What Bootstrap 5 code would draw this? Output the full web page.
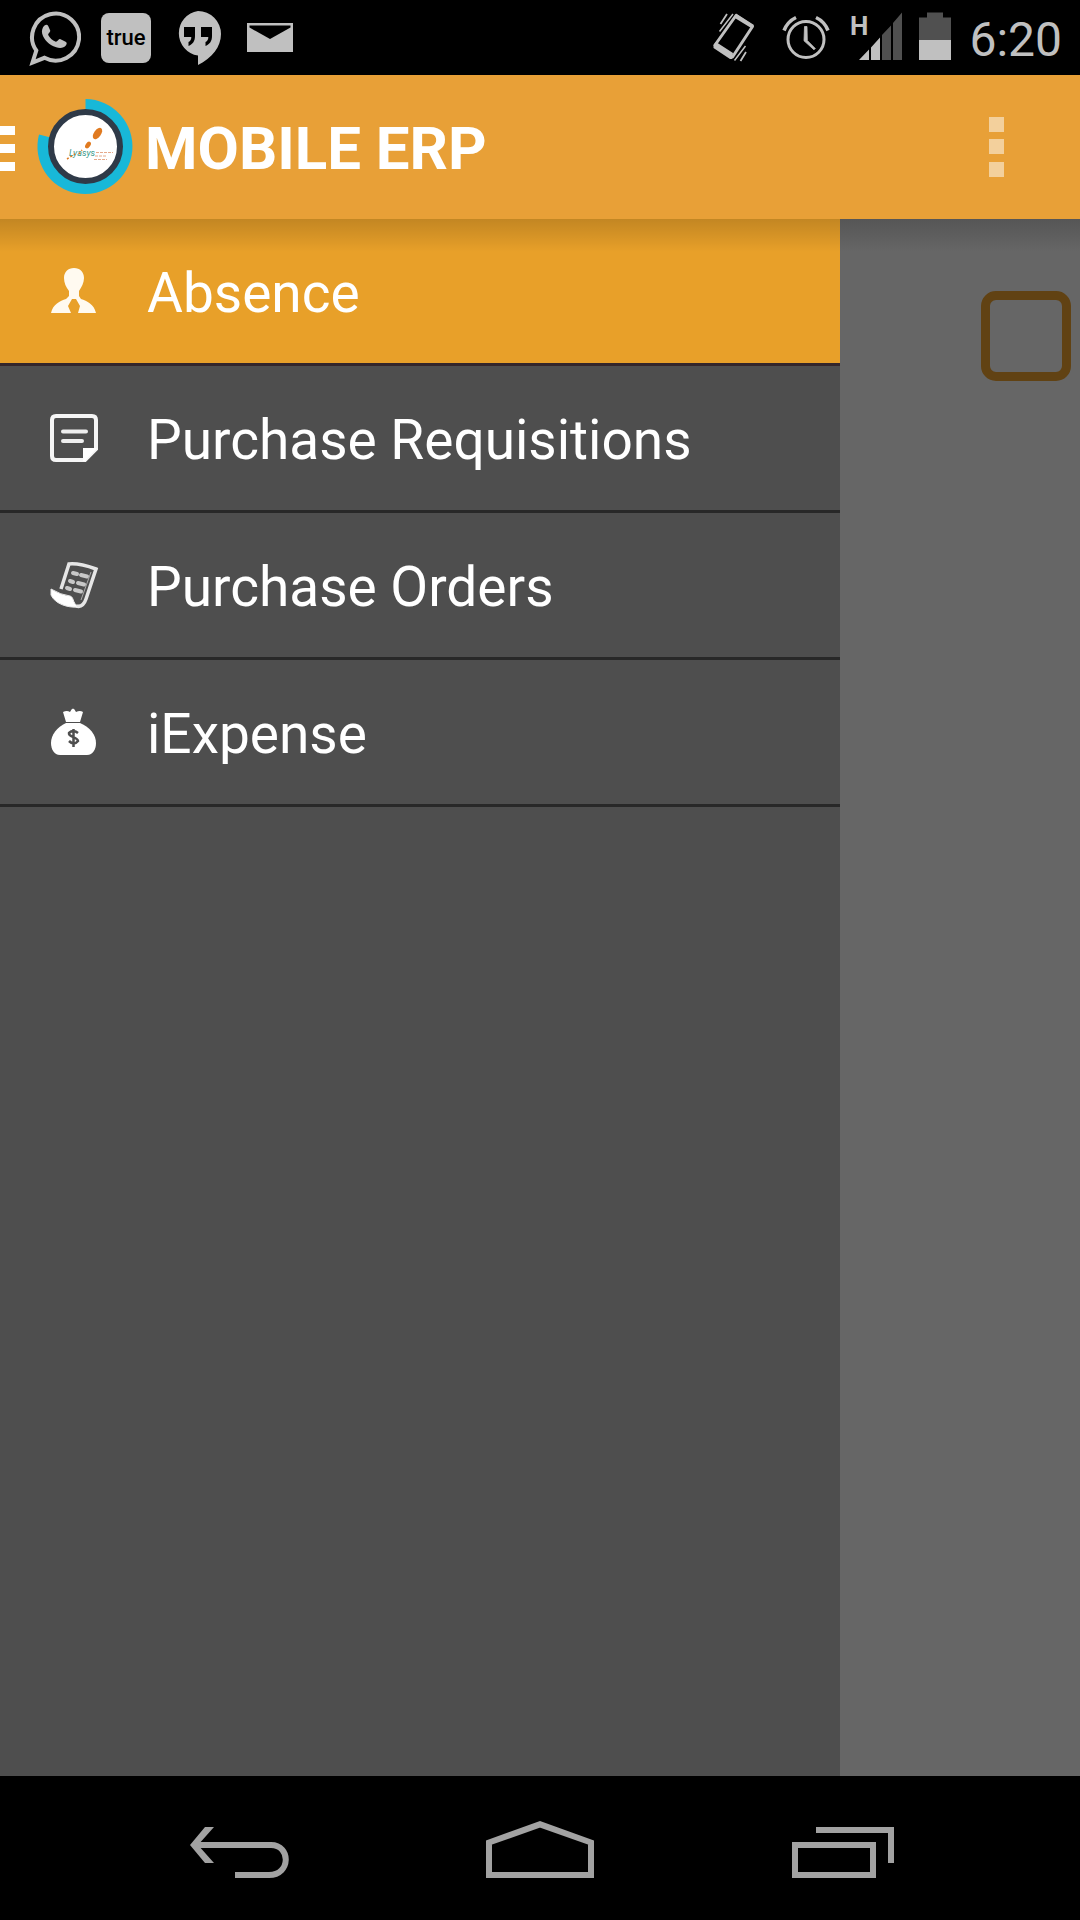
<!DOCTYPE html>
<html lang="en">
<head>
<meta charset="utf-8">
<meta name="viewport" content="width=device-width, initial-scale=1">
<title>Mobile ERP</title>
<link href="https://cdn.jsdelivr.net/npm/bootstrap@5.3.0/dist/css/bootstrap.min.css" rel="stylesheet">
<style>
  body { font-family: Roboto, "Noto Sans", sans-serif; background: #000; }
  svg { display: block; flex: none; }
  .statusbar { height: 75px; padding: 0 18px; color: #c0c0c0; background: #000; }
  .slot { width: 72px; }
  .true-tile { width: 50px; height: 50px; border-radius: 8px; background: #c0c0c0; color: #000; font-size: 22px; font-weight: 500; line-height: 50px; text-align: center; }
  .clock { font-size: 48px; line-height: 60px; padding-top: 4px; margin-left: 18px; }
  .appbar { height: 144px; background: #e8a037; }
  .brand-title { font-size: 60px; line-height: 72px; padding-top: 4px; font-weight: 700; color: #fff; }
  .overflow-btn { width: 168px; height: 144px; }
  .screen { background: #666; }
  .screen::before { content: ""; position: absolute; z-index: 5; left: 0; right: 0; top: 0; height: 33px; pointer-events: none; background: linear-gradient(rgba(0,0,0,.16), rgba(0,0,0,.09) 45%, rgba(0,0,0,0)); }
  .drawer { width: calc(100% - 240px); background: #4e4e4e; }
  .drawer .list-group .list-group-item { height: 147px; border: 0; border-bottom: 3px solid #282828; background: transparent; color: #fff; font-size: 55px; line-height: 72px; padding: 0 48px; gap: 48px; }
  .drawer .list-group .list-group-item.active { background: #e8a029; border-bottom-color: #33262b; margin: 0; }
  .item-label { padding-top: 4px; }
  .behind { width: 240px; padding: 72px 9px; }
  .behind .form-check-input { width: 90px; height: 90px; margin: 0; border: 9px solid #614213; border-radius: 15px; background: transparent; }
  .navkeys { height: 144px; padding: 0 90px; background: #000; }
</style>
<script src="https://cdn.jsdelivr.net/npm/bootstrap@5.3.0/dist/js/bootstrap.bundle.min.js"></script>
</head>
<body class="d-flex flex-column min-vh-100">

<div class="statusbar d-flex align-items-center justify-content-between">
  <div class="d-flex align-items-center">
    <div class="slot d-flex justify-content-center">
      <svg width="54" height="75" viewBox="27 0 54 75" aria-label="WhatsApp">
        <path d="M32.500 62.500 36.300 50.500A23.500 23.500 0 1 1 44.500 57.800Z" fill="none" stroke="#c0c0c0" stroke-width="4" stroke-linejoin="miter"/>
        <path d="M44.500 25.500c1.500-1.200 3-1 3.700.5l2 4.500c.5 1.300-2.400 3.300-2 4.400 1.500 3 4 5.200 7.600 6.800 1.400.4 2.800-3.200 4.200-2.700l5.600 2.800c1.600.8 1.200 2.200.4 3.500-2 2.800-6 3.300-9.800 2-7.600-2.500-12.200-7.800-14-13.600-.8-3 .2-6.400 2.300-8.200Z" fill="#c0c0c0"/>
      </svg>
    </div>
    <div class="slot d-flex justify-content-center"><div class="true-tile">true</div></div>
    <div class="slot d-flex justify-content-center">
      <svg width="48" height="75" viewBox="174 0 48 75" aria-label="Hangouts">
        <path d="M198 11a23 23 0 0 1 23 23c0 13-9 24-23 31v-9.500A22.500 22.500 0 0 1 198 11Z" fill="#c0c0c0"/>
        <path d="M184 27h11v9c0 5-2 8-6.500 10v-4c2-1 2.800-2.500 2.800-5H184ZM201 27h11v9c0 5-2 8-6.500 10v-4c2-1 2.800-2.500 2.800-5H201Z" fill="#000"/>
      </svg>
    </div>
    <div class="slot d-flex justify-content-center">
      <svg width="46" height="75" viewBox="247 0 46 75" aria-label="Mail">
        <rect x="247" y="23" width="46" height="29" fill="#c0c0c0"/>
        <path d="M249.500 25.500h41v2L270 39 249.500 27.500Z" fill="#000"/>
      </svg>
    </div>
  </div>
  <div class="d-flex align-items-center">
    <svg width="72" height="75" viewBox="698 0 72 75" aria-label="Vibrate">
      <path d="M736 15.500 752.500 26.500 732.500 57 715 45Z" fill="none" stroke="#c0c0c0" stroke-width="3" stroke-linejoin="round"/>
      <path d="M736 13.500 754 25l-2 3.500-18-11ZM716 42l17 11-1 6h-2L713.500 48v-3Z" fill="#c0c0c0"/>
      <path d="M727 14l-6.500 10M746 52l-5.500 9" fill="none" stroke="#c0c0c0" stroke-width="1.800"/>
      <path d="M733 14 719.500 31.500M745.500 46 734.500 60.500" fill="none" stroke="#c0c0c0" stroke-width="1.500"/>
    </svg>
    <svg width="72" height="75" viewBox="770 0 72 75" fill="none" stroke="#c0c0c0" aria-label="Alarm">
      <circle cx="806" cy="39.500" r="18" stroke-width="3"/>
      <path d="M784 30.500A24 24 0 0 1 796 17.500M828 30.500A24 24 0 0 0 816 17.500" stroke-width="3.500"/>
      <path d="M804.500 26.500h2.500l.3 14 8 8-1.300 1.300-10-9Z" fill="#c0c0c0" stroke-width="0.800"/>
    </svg>
    <svg width="65" height="75" viewBox="842 0 65 75" aria-label="Signal">
      <text x="850" y="35" font-size="26" font-weight="700" fill="#c0c0c0">H</text>
      <path d="M859 60 869 49.500V60ZM871 47.500 880 37.500V60H871Z" fill="#c0c0c0"/>
      <path d="M882 35 891 25.500V60H882ZM893 23 902 12.500V60H893Z" fill="#505050"/>
    </svg>
    <svg class="ms-2" width="36" height="75" viewBox="915 0 36 75" aria-label="Battery">
      <path d="M919 17.500h8V12.500h16v5h8V40H919Z" fill="#505050"/>
      <path d="M919 40h32v20H919Z" fill="#c0c0c0"/>
    </svg>
    <span class="clock">6:20</span>
  </div>
</div>

<header class="appbar d-flex align-items-center justify-content-between">
  <a href="#drawer" class="d-flex align-items-center text-decoration-none">
    <svg width="145" height="144" viewBox="0 75 145 144" aria-label="Toggle drawer">
      <path d="M0 126h15v9H0ZM0 144h15v9H0ZM0 162h15v9H0Z" fill="#fff"/>
      <path d="M85.500 99A47.500 47.500 0 1 1 39 134.500L85.500 146.500Z" fill="#18b8d8"/>
      <circle cx="85.500" cy="146.500" r="34.500" fill="#fff" stroke="#2f3a48" stroke-width="6"/>
      <ellipse cx="97.500" cy="133.500" rx="3.500" ry="6.500" transform="rotate(35 97.500 133.500)" fill="#e07a20"/>
      <ellipse cx="88" cy="145" rx="2.300" ry="3.800" transform="rotate(35 88 145)" fill="#e07a20"/>
      <text x="69" y="156" font-size="9" font-style="italic" fill="#3a9a8c">Lyasys</text>
      <path d="M67 159 75 154M79 154l3-4" stroke="#e07a20" stroke-width="1.500" stroke-dasharray="2 2"/>
      <path d="M96 152.500h17M95 156h11M94 159.500h13" stroke="#e6a98a" stroke-width="1" stroke-dasharray="3 1"/>
    </svg>
    <span class="brand-title">MOBILE ERP</span>
  </a>
  <button type="button" class="btn overflow-btn p-0 border-0 d-flex justify-content-center" aria-label="More options">
    <svg width="15" height="144" viewBox="0 0 15 144"><path d="M0 42h15v15H0ZM0 64h15v15H0ZM0 87h15v15H0Z" fill="#f3d09c"/></svg>
  </button>
</header>

<main class="screen position-relative d-flex flex-grow-1">
  <nav id="drawer" class="drawer">
    <div class="list-group list-group-flush">
      <a href="#absence" class="list-group-item list-group-item-action d-flex align-items-center active" aria-current="page">
        <svg width="51" height="48" viewBox="0 0 51 48"><path d="M26 1c6 0 10 4 10 10 0 5-2.500 9-5 13v5l2 3c6 2 13 5 15 14H30l2-7-4-7h-4l-4 7 3 7H3c2-9 9-12 15-14l3-3v-5c-3-4-5-8-5-13C16 5 20 1 26 1Z" fill="#fffaf0"/></svg>
        <span class="item-label">Absence</span>
      </a>
      <a href="#requisitions" class="list-group-item list-group-item-action d-flex align-items-center">
        <svg width="51" height="48" viewBox="0 0 51 48"><path d="M8 2h36q4 0 4 4v29L37 46H8q-4 0-4-4V6q0-4 4-4Z" fill="none" stroke="#f5f5f5" stroke-width="4"/><path d="M35 47V34h14L37 47Z" fill="#fff"/><path d="M15 17.500h23M15 27h19" stroke="#eee" stroke-width="4" stroke-linecap="round"/></svg>
        <span class="item-label">Purchase Requisitions</span>
      </a>
      <a href="#orders" class="list-group-item list-group-item-action d-flex align-items-center">
        <svg width="51" height="48" viewBox="0 0 51 48" fill="none" stroke="#e6e6e6"><path d="M13 28 21 3q10-1 27 5L38 38q-3 9-10 7" stroke-width="3.500"/><path d="M3 28q10 6 19 7c4 1 2 6 8 11-10 1-23-3-27-12Z" fill="#fff" stroke-width="1"/><path d="M25 12l4 1M33 14l6 1.500M22 20l3 1M30 22l6 1.500M19 27l3 1M27 29l6 1.500" stroke-width="4" stroke="#c8c8c8" stroke-linecap="round"/><path d="m43 11-10 28" stroke="#aaa"/></svg>
        <span class="item-label">Purchase Orders</span>
      </a>
      <a href="#iexpense" class="list-group-item list-group-item-action d-flex align-items-center">
        <svg width="51" height="48" viewBox="0 0 51 48"><path d="M15 4q4-2 7 0 3-7 6 0 4-2 7 0l-3 10H18Z" fill="#fff"/><path d="M18 15h14c10 4 16 12 16 20 0 6-3 12-9 12H12c-6 0-9-6-9-12 0-8 6-16 15-20Z" fill="#fff"/><path d="M30 25q-5-4-9 0c-1 4 9 4 9 8q-4 5-9 0M25.500 21v18" fill="none" stroke="#4e4e4e" stroke-width="2.500"/></svg>
        <span class="item-label">iExpense</span>
      </a>
    </div>
  </nav>
  <div class="behind d-flex justify-content-end align-items-start">
    <input class="form-check-input" type="checkbox" aria-label="Select">
  </div>
</main>

<footer class="navkeys d-flex">
  <button type="button" class="btn p-0 border-0 flex-fill d-flex justify-content-center" aria-label="Back">
    <svg width="150" height="144" viewBox="165 1776 150 144" fill="none" stroke="#a2a2a2" stroke-width="6"><path d="M197 1845H271C291 1845 291 1875 269 1875H235"/><path d="M205 1827h9l-16 18 16 18h-9L190 1845Z" fill="#a2a2a2" stroke="none"/></svg>
  </button>
  <button type="button" class="btn p-0 border-0 flex-fill d-flex justify-content-center" aria-label="Home">
    <svg width="150" height="144" viewBox="465 1776 150 144" fill="none" stroke="#a2a2a2" stroke-width="6"><path d="M489 1842.500 540 1824.300 591 1842.500V1875H489Z"/></svg>
  </button>
  <button type="button" class="btn p-0 border-0 flex-fill d-flex justify-content-center" aria-label="Recent apps">
    <svg width="150" height="144" viewBox="765 1776 150 144" fill="none" stroke="#a2a2a2" stroke-width="6"><path d="M795 1845h78v30h-78ZM816 1830h75v33"/></svg>
  </button>
</footer>
</body>
</html>
